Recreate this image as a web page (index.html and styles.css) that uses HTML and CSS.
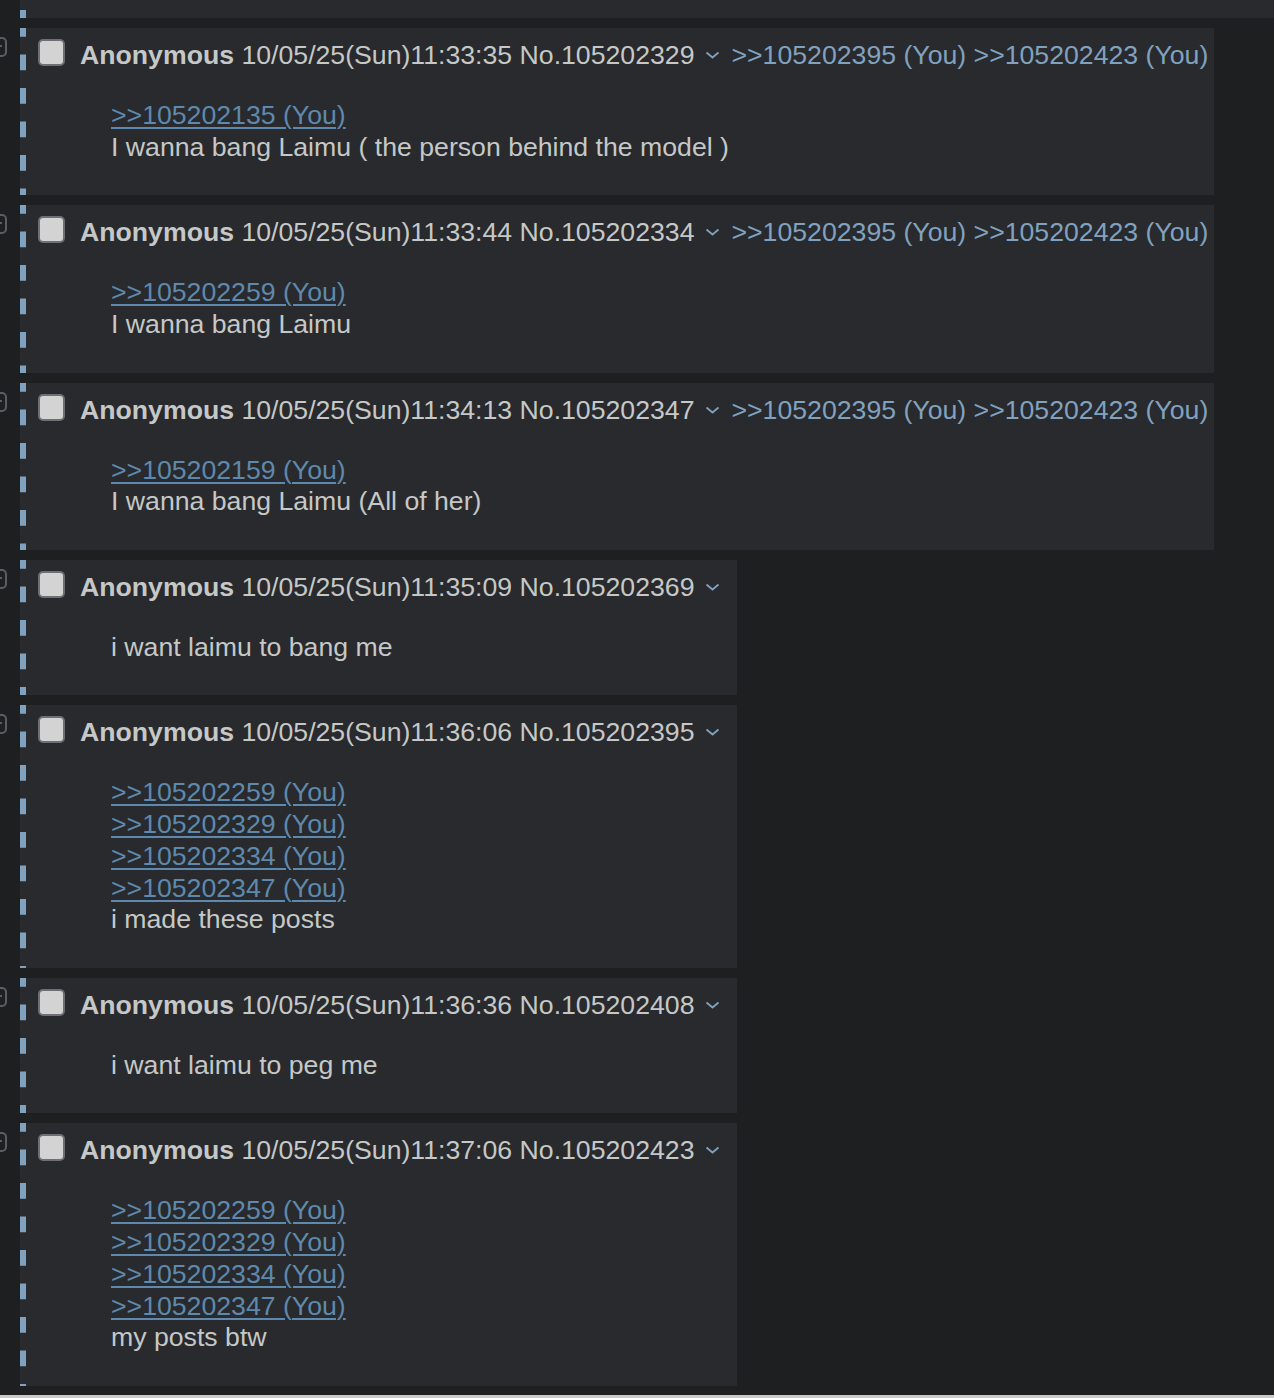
FILE: index.html
```html
<!DOCTYPE html>
<html>
<head>
<meta charset="utf-8">
<link rel="stylesheet" href="styles.css">
</head>
<body>
<div class="thread">
  <div class="top-frag"></div>

  <div class="row">
    <div class="side"><svg class="hide" viewBox="0 0 20 20"><rect x="1" y="1" width="18" height="18" rx="4"/><line x1="5" y1="9" x2="15" y2="9"/></svg></div>
    <div class="post">
      <div class="head"><input type="checkbox" class="cb"><span class="info"><span class="name">Anonymous</span> 10/05/25(Sun)11:33:35 No.105202329<svg class="menu" viewBox="0 0 15 8"><path d="M1.5 1.5 L7.5 6.5 L13.5 1.5"/></svg><a class="backlink">&gt;&gt;105202395 (You)</a> <a class="backlink">&gt;&gt;105202423 (You)</a></span></div>
      <div class="body"><a class="ql">&gt;&gt;105202135 (You)</a><br>I wanna bang Laimu ( the person behind the model )</div>
    </div>
  </div>

  <div class="row">
    <div class="side"><svg class="hide" viewBox="0 0 20 20"><rect x="1" y="1" width="18" height="18" rx="4"/><line x1="5" y1="9" x2="15" y2="9"/></svg></div>
    <div class="post">
      <div class="head"><input type="checkbox" class="cb"><span class="info"><span class="name">Anonymous</span> 10/05/25(Sun)11:33:44 No.105202334<svg class="menu" viewBox="0 0 15 8"><path d="M1.5 1.5 L7.5 6.5 L13.5 1.5"/></svg><a class="backlink">&gt;&gt;105202395 (You)</a> <a class="backlink">&gt;&gt;105202423 (You)</a></span></div>
      <div class="body"><a class="ql">&gt;&gt;105202259 (You)</a><br>I wanna bang Laimu</div>
    </div>
  </div>

  <div class="row">
    <div class="side"><svg class="hide" viewBox="0 0 20 20"><rect x="1" y="1" width="18" height="18" rx="4"/><line x1="5" y1="9" x2="15" y2="9"/></svg></div>
    <div class="post">
      <div class="head"><input type="checkbox" class="cb"><span class="info"><span class="name">Anonymous</span> 10/05/25(Sun)11:34:13 No.105202347<svg class="menu" viewBox="0 0 15 8"><path d="M1.5 1.5 L7.5 6.5 L13.5 1.5"/></svg><a class="backlink">&gt;&gt;105202395 (You)</a> <a class="backlink">&gt;&gt;105202423 (You)</a></span></div>
      <div class="body"><a class="ql">&gt;&gt;105202159 (You)</a><br>I wanna bang Laimu (All of her)</div>
    </div>
  </div>

  <div class="row">
    <div class="side"><svg class="hide" viewBox="0 0 20 20"><rect x="1" y="1" width="18" height="18" rx="4"/><line x1="5" y1="9" x2="15" y2="9"/></svg></div>
    <div class="post">
      <div class="head"><input type="checkbox" class="cb"><span class="info"><span class="name">Anonymous</span> 10/05/25(Sun)11:35:09 No.105202369<svg class="menu" viewBox="0 0 15 8"><path d="M1.5 1.5 L7.5 6.5 L13.5 1.5"/></svg></span></div>
      <div class="body">i want laimu to bang me</div>
    </div>
  </div>

  <div class="row">
    <div class="side"><svg class="hide" viewBox="0 0 20 20"><rect x="1" y="1" width="18" height="18" rx="4"/><line x1="5" y1="9" x2="15" y2="9"/></svg></div>
    <div class="post">
      <div class="head"><input type="checkbox" class="cb"><span class="info"><span class="name">Anonymous</span> 10/05/25(Sun)11:36:06 No.105202395<svg class="menu" viewBox="0 0 15 8"><path d="M1.5 1.5 L7.5 6.5 L13.5 1.5"/></svg></span></div>
      <div class="body"><a class="ql">&gt;&gt;105202259 (You)</a><br><a class="ql">&gt;&gt;105202329 (You)</a><br><a class="ql">&gt;&gt;105202334 (You)</a><br><a class="ql">&gt;&gt;105202347 (You)</a><br>i made these posts</div>
    </div>
  </div>

  <div class="row">
    <div class="side"><svg class="hide" viewBox="0 0 20 20"><rect x="1" y="1" width="18" height="18" rx="4"/><line x1="5" y1="9" x2="15" y2="9"/></svg></div>
    <div class="post">
      <div class="head"><input type="checkbox" class="cb"><span class="info"><span class="name">Anonymous</span> 10/05/25(Sun)11:36:36 No.105202408<svg class="menu" viewBox="0 0 15 8"><path d="M1.5 1.5 L7.5 6.5 L13.5 1.5"/></svg></span></div>
      <div class="body">i want laimu to peg me</div>
    </div>
  </div>

  <div class="row">
    <div class="side"><svg class="hide" viewBox="0 0 20 20"><rect x="1" y="1" width="18" height="18" rx="4"/><line x1="5" y1="9" x2="15" y2="9"/></svg></div>
    <div class="post">
      <div class="head"><input type="checkbox" class="cb"><span class="info"><span class="name">Anonymous</span> 10/05/25(Sun)11:37:06 No.105202423<svg class="menu" viewBox="0 0 15 8"><path d="M1.5 1.5 L7.5 6.5 L13.5 1.5"/></svg></span></div>
      <div class="body"><a class="ql">&gt;&gt;105202259 (You)</a><br><a class="ql">&gt;&gt;105202329 (You)</a><br><a class="ql">&gt;&gt;105202334 (You)</a><br><a class="ql">&gt;&gt;105202347 (You)</a><br>my posts btw</div>
    </div>
  </div>

  <div class="rule"></div>
</div>
</body>
</html>
```
FILE: styles.css
```css
html, body {
  margin: 0;
  padding: 0;
}
body {
  background: #1d1f21;
  color: #c5c8c6;
  font-family: "Liberation Sans", Arial, Helvetica, sans-serif;
  font-size: 26.67px;
  overflow: hidden;
}
.top-frag {
  margin-left: 20px;
  height: 18px;
  border-bottom: 1px solid #1d1f21;
  background-color: #282a2e;
  background-image: linear-gradient(#81a2be 0 15.5px, transparent 15.5px 33.5px);
  background-size: 6px 33.5px;
  background-repeat: repeat-y;
  background-position: 0 10px;
}
.row {
  display: flex;
  align-items: flex-start;
  margin-top: 8px;
}
.side {
  width: 20px;
  flex: none;
}
.hide {
  display: block;
  width: 20px;
  height: 20px;
  margin: 10px 0 0 -13px;
  fill: none;
  stroke: #5a5e64;
  stroke-width: 2;
}
.post {
  background-color: #282a2e;
  background-image: linear-gradient(#81a2be 0 15.5px, transparent 15.5px 33.5px);
  background-size: 6px 33.5px;
  background-repeat: repeat-y;
  background-position: 0 -7px;
  border-top: 1px solid #1d1f21;
  border-bottom: 1px solid #1d1f21;
  padding: 11px 6px 31.75px 18px;
}
.head {
  display: flex;
  align-items: flex-start;
  white-space: nowrap;
}
.cb {
  appearance: none;
  -webkit-appearance: none;
  flex: none;
  box-sizing: border-box;
  width: 27px;
  height: 27px;
  margin: 0 15px 0 0;
  background: #d3d3d3;
  border: 2px solid #6c6f75;
  border-radius: 5px;
}
.info {
  line-height: 32px;
}
.name {
  font-weight: bold;
}
.menu {
  display: inline-block;
  width: 15px;
  height: 8px;
  margin: 0 11px;
  vertical-align: 5px;
  fill: none;
  stroke: #81a2be;
  stroke-width: 1.8;
}
.backlink {
  color: #81a2be;
}
.body {
  margin: 29px 0 0 73px;
  line-height: 31.75px;
}
.ql {
  color: #5f89ac;
  text-decoration: underline;
  text-decoration-thickness: 2px;
  text-underline-offset: 3px;
}
.rule {
  height: 3px;
  margin-top: 8px;
  background: #c9c9c9;
}
```
